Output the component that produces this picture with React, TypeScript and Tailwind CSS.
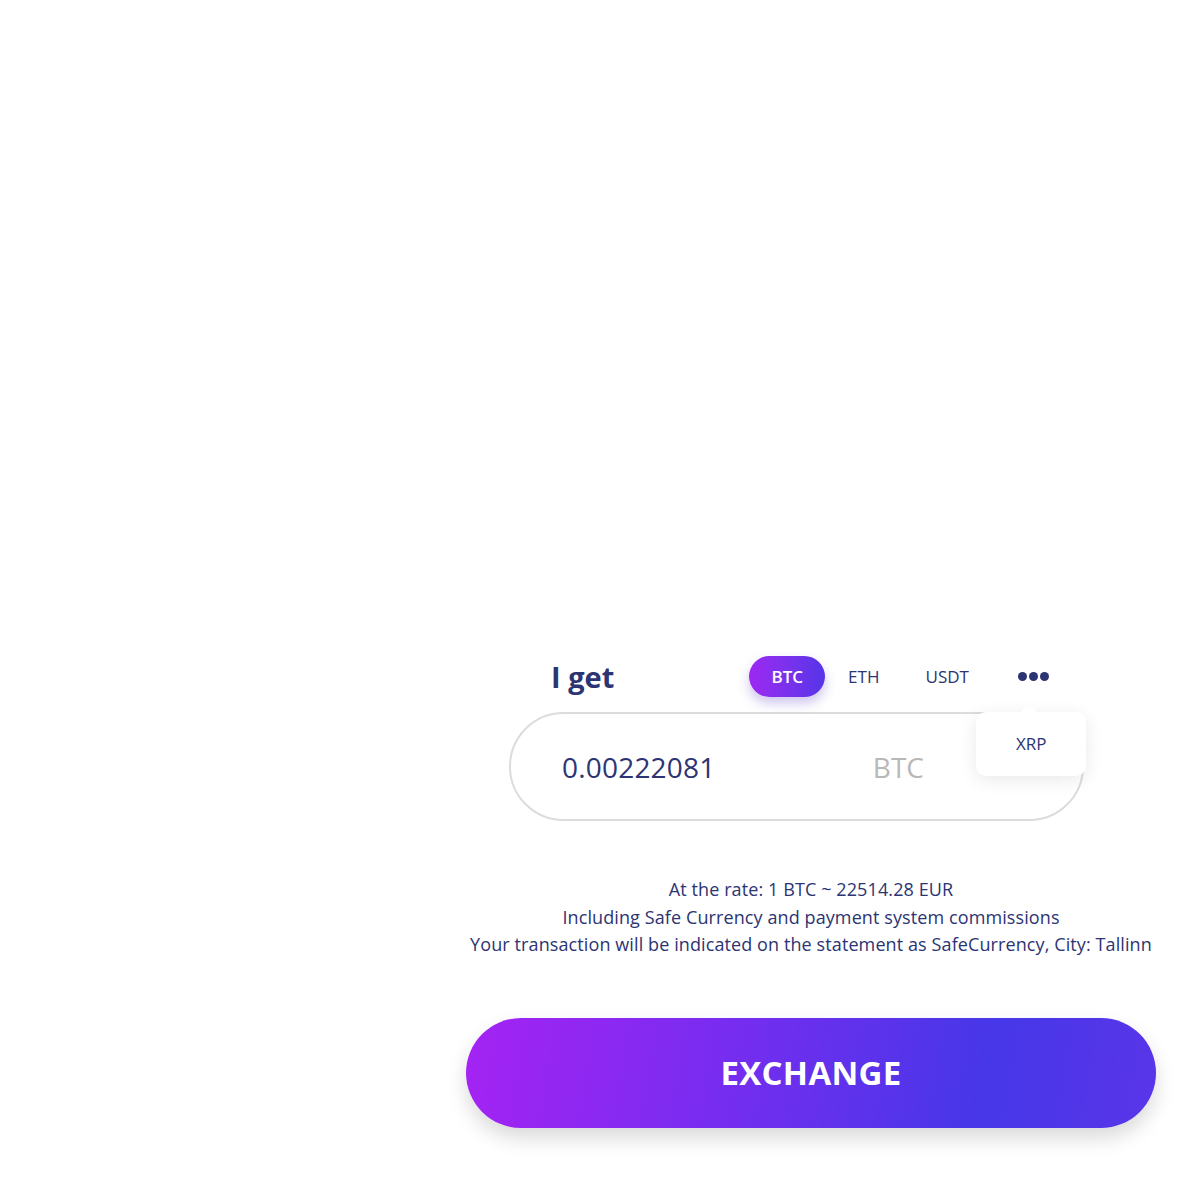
const font = { fontFamily: '"Open Sans", "DejaVu Sans", sans-serif' };

export default function App() {
  return (
    <div className="min-h-[1190px] w-[1190px] bg-white text-[#2c3473]" style={font}>
      <div className="pt-[656px] pl-[466px] w-[1156px]">
        <div className="w-[690px]">
          {/* header row */}
          <div className="flex items-center h-[41px]">
            <h2 className="ml-[85px] text-[29px] font-bold leading-none">I get</h2>
            <div className="ml-[135px] flex items-center">
              <span className="h-[41px] w-[76px] rounded-full bg-gradient-to-r from-[#9d27f1] to-[#5534e8] text-white text-[17px] font-semibold flex items-center justify-center shadow-[0_6px_12px_rgba(90,60,200,0.3)]">
                BTC
              </span>
              <span className="ml-[13.5px] w-[50px] text-center text-[17px] font-medium">ETH</span>
              <span className="ml-[28.5px] w-[60px] text-center text-[17px] font-medium">USDT</span>
              <div className="relative ml-[41px] flex gap-[2px]">
                <span className="w-[9px] h-[9px] rounded-full bg-[#2c3473]" />
                <span className="w-[9px] h-[9px] rounded-full bg-[#2c3473]" />
                <span className="w-[9px] h-[9px] rounded-full bg-[#2c3473]" />
                <div className="absolute top-[40px] left-[-42px] w-[110px] h-[64px] rounded-[10px] bg-white shadow-[0_4px_18px_rgba(0,0,0,0.09)] flex items-center justify-center text-[17px] font-medium z-10">
                  <span className="absolute -top-[8px] left-[45px] w-0 h-0 border-l-[8px] border-r-[8px] border-b-[8px] border-l-transparent border-r-transparent border-b-white" />
                  XRP
                </div>
              </div>
            </div>
          </div>

          {/* amount field */}
          <div className="mt-[15px] ml-[43px] w-[575px] h-[109px] rounded-full border-2 border-[#dcdcdc] flex items-center pl-[51px]">
            <span className="text-[28px] font-medium tracking-[0.2px]">0.00222081</span>
            <span className="ml-auto mr-[158px] text-[28px] font-medium text-[#b8b8b8]">BTC</span>
          </div>

          {/* info */}
          <div className="mt-[55px] text-center text-[18px] leading-[27.5px] tracking-[0.1px]">
            <p>At the rate: 1 BTC ~ 22514.28 EUR</p>
            <p>Including Safe Currency and payment system commissions</p>
            <p className="whitespace-nowrap">Your transaction will be indicated on the statement as SafeCurrency, City: Tallinn</p>
          </div>

          {/* button */}
          <button className="mt-[59px] w-[690px] h-[110px] rounded-full bg-[linear-gradient(100deg,#a523f3_0%,#7a2cf0_35%,#4637e8_75%,#5a35e8_100%)] text-white text-[33px] font-bold tracking-[0.3px] shadow-[0_10px_20px_rgba(0,0,0,0.15)]">
            EXCHANGE
          </button>
        </div>
      </div>
    </div>
  );
}
